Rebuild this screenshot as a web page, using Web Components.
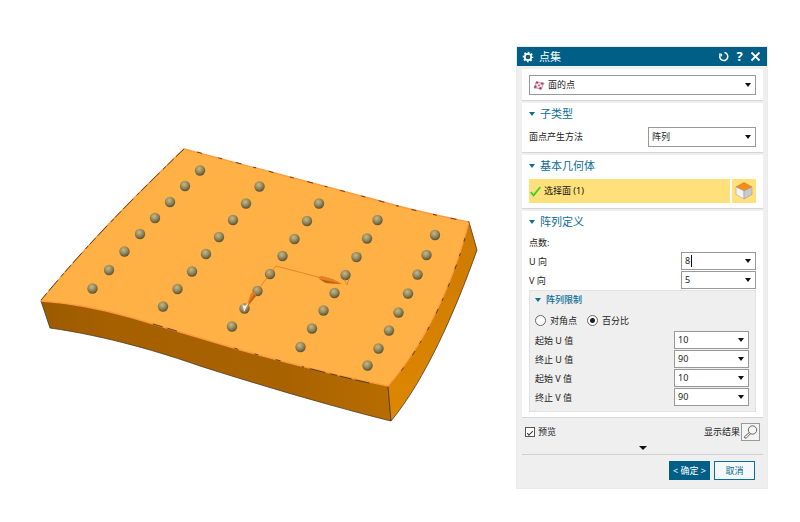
<!DOCTYPE html>
<html lang="zh-CN">
<head>
<meta charset="utf-8">
<title>点集</title>
<style>
    body {
        margin: 0;
        background: #fff;
        color: #222;
        font: 9px/12px "Noto Sans", "Noto Sans CJK SC", sans-serif;
    }
</style>
</head>
<body>

<template id="app-window-template">
    <style>
        :host {
            display: grid;
            grid-template-columns: minmax(0, 1fr) 250px;
            align-items: start;
            padding-right: 33px;
        }
        .dialog {
            padding: 47px 0 32px;
        }
    </style>
    <slot name="view"></slot>
    <div class="dialog"><slot></slot></div>
</template>

<template id="model-view-template">
    <style>
        :host { display: block; }
        svg { display: block; width: 100%; height: auto; }
    </style>
    <svg viewBox="0 0 517 522" role="img" aria-label="模型">
        <defs>
            <radialGradient id="ball" cx="42%" cy="34%" r="65%">
                <stop offset="0" stop-color="#c6b985"/>
                <stop offset=".5" stop-color="#998c60"/>
                <stop offset="1" stop-color="#5c5436"/>
            </radialGradient>
            <linearGradient id="front">
                <stop offset="0" stop-color="#9c5a00"/>
                <stop offset=".2" stop-color="#a66000"/>
                <stop offset=".7" stop-color="#a86200"/>
                <stop offset="1" stop-color="#b86d00"/>
            </linearGradient>
            <linearGradient id="side" x1="0" y1="0" x2="0" y2="1">
                <stop offset="0" stop-color="#cc7a00"/>
                <stop offset="1" stop-color="#de8700"/>
            </linearGradient>
        </defs>
        <path fill="url(#front)" stroke="#4d3826" stroke-width=".8" d="M41 301 L50 328 C107 336 163 353 200 366 C250 382 330 406 391 421 L388 386 C330 374 280 361 237 349 L133 318 Q85 304 41 301Z"/>
        <path fill="url(#side)" stroke="#4d3826" stroke-width=".8" d="M469 222 L477 250 C455 312 425 380 391 421 L388 386 C425 344 453 284 469 222Z"/>
        <path id="top" fill="#ffb145" stroke="#ff9a3d" stroke-width="1.4" d="M184 149 C270 172 335 189 380 201 C410 210 440 216 469 222 C453 284 425 344 388 386 C330 374 280 361 237 349 L133 318 Q85 304 41 301 C72 263 108 222 184 149Z"/>
        <g fill="none" stroke="#49382a" stroke-width=".9">
            <path stroke-dasharray="5 17 4 14 6 12 3 13" d="M197 152 C275 173 335 189 380 201 C410 210 440 216 469 222"/>
            <path stroke-dasharray="4 12 3 9 5 15" d="M465 238 C450 291 424 344 394 380"/>
            <path stroke-dasharray="14 4 12 3 7 5 16 6 2 22 5 18 4 17 4 60 10 5 10 300" d="M369 383 C325 373 280 361 237 349 L133 318 Q85 304 41 301"/>
            <path stroke-dasharray="9 3 14 5 4 2" d="M41 300 C72 263 108 222 184 149"/>
        </g>
        <g id="points" fill="url(#ball)"></g>
        <g fill="none" stroke="#dc7c24" stroke-width=".8">
            <path d="M247 304 L276 266 L318 277"/>
            <path d="M344 279 L347 285 L349 279"/>
        </g>
        <path fill="#e87f22" d="M317 277 L322 276 L333 279 L342 284 L326 283Z"/>
        <path fill="#b95d12" d="M319 279 L342 284 L326 283Z"/>
        <path fill="#e87f22" d="M251 293 Q255 291 256 296 L252 301 L245 311Z"/>
        <path fill="#c46618" d="M254 294 L256 296 L252 301 L247 306Z"/>
        <path fill="#f1eee9" d="M249 302 L244 312 L243 306 L241 304 L245 306Z"/>
    </svg>
</template>

<template id="dialog-panel-template">
    <style>
        :host {
            display: block;
            background: #efefef;
            box-shadow: 0 0 0 1px #ebebeb;
        }
        header {
            display: flex;
            align-items: center;
            gap: 5px;
            height: 19px;
            padding: 0 6px 0 5px;
            background: #005f87;
            color: #fff;
        }
        h1 {
            flex: 1;
            margin: 0;
            font-size: 11px;
            font-weight: normal;
            line-height: 19px;
        }
        header button {
            display: flex;
            justify-content: center;
            width: 11px;
            padding: 0;
            border: 0;
            background: none;
            color: inherit;
            font: bold 13px/19px "Noto Sans", sans-serif;
        }
        main {
            display: grid;
            gap: 2px;
            padding: 3px 4px 0 5px;
        }
    </style>
    <header>
        <svg width="12" height="12" viewBox="0 0 12 12" fill="none" stroke="#fff">
            <circle cx="6" cy="6" r="3.2" stroke-width="1.7"/>
            <circle cx="6" cy="6" r="4.5" stroke-width="1.6" stroke-dasharray="1.8 1.734" stroke-dashoffset=".9"/>
        </svg>
        <h1></h1>
        <button type="button" aria-label="重置"><svg width="11" height="11" viewBox="0 0 11 11" fill="none" stroke="#fff" stroke-width="1.5"><path d="M2.4 3.4 A4 4 0 1 0 6.5 1.6"/><path d="M1 3 H3.6 V5.4" stroke-width="1"/></svg></button>
        <button type="button">?</button>
        <button type="button" aria-label="关闭"><svg width="11" height="11" viewBox="0 0 11 11" stroke="#fff" stroke-width="1.8"><path d="M1.5 1.5 L9.5 9.5 M9.5 1.5 L1.5 9.5"/></svg></button>
    </header>
    <main><slot></slot></main>
    <slot name="footer"></slot>
</template>

<template id="panel-section-template">
    <style>
        :host {
            display: block;
            padding: 0 7px 5px;
            background: #fff;
            border-bottom: 1px solid #d6d6d6;
        }
        h2 { margin: 0; font: inherit; }
        button {
            display: flex;
            align-items: center;
            gap: 5px;
            height: 21px;
            padding: 0;
            border: 0;
            background: none;
            color: #0b6e94;
            font: inherit;
            font-size: 11px;
            line-height: 21px;
        }
        :host([nested]) {
            padding: 0 6px 4px 5px;
            background: #efefef;
            border: 1px solid #e2e2e2;
        }
        :host([nested]) button {
            height: 18px;
            font-size: 9px;
            font-weight: 500;
            line-height: 18px;
        }
    </style>
    <h2><button type="button"><svg width="6" height="4" viewBox="0 0 6 4"><path fill="#0b6e94" d="M0 0 H6 L3 4Z"/></svg><span></span></button></h2>
    <slot></slot>
</template>

<template id="field-row-template">
    <style>
        :host {
            display: flex;
            align-items: center;
            justify-content: space-between;
            --w: 75px;
        }
        label:empty { display: none; }
        .box {
            display: flex;
            align-items: center;
            box-sizing: border-box;
            width: var(--w);
            height: 18px;
            margin-bottom: 1px;
            border: 1px solid #999;
            background: #fff;
        }
        :host([tall]) .box { height: 20px; margin: 0; }
        select, input {
            flex: 1;
            min-width: 0;
            height: 16px;
            margin: 0;
            padding: 0 3px;
            border: 0;
            outline: 0;
            background: none;
            appearance: none;
            color: #222;
            font: inherit;
            line-height: 16px;
        }
        .arrow {
            display: flex;
            padding: 0 4px;
            border: 0;
            background: none;
        }
        :host([editing]) input {
            background: linear-gradient(#111, #111) 9px 2px / 1px 12px no-repeat;
        }
        ::slotted(svg) { flex: none; margin-left: 3px; }
    </style>
    <label for="control"></label>
    <div class="box"><slot></slot><button class="arrow" type="button" tabindex="-1" aria-label="展开"><svg width="6" height="4" viewBox="0 0 6 4"><path fill="#111" d="M0 0 H6 L3 4Z"/></svg></button></div>
</template>

<template id="face-picker-template">
    <style>
        :host { display: flex; gap: 2px; margin-top: 3px; }
        button {
            display: flex;
            align-items: center;
            height: 24px;
            padding: 0;
            border: 0;
            background: #ffe07a;
            color: #111;
            font: inherit;
        }
        .pick { flex: 1; gap: 3px; padding: 0 1px; }
        .filter { width: 24px; justify-content: center; }
    </style>
    <button class="pick" type="button">
        <svg width="11" height="11" viewBox="0 0 11 11" fill="none" stroke="#35d321" stroke-width="1.8"><path d="M.8 6.2 L3.6 9.3 L10.3 1"/></svg>
        <span><slot></slot></span>
    </button>
    <button class="filter" type="button" aria-label="面规则">
        <svg width="20" height="20" viewBox="0 0 20 20">
            <path fill="#f58a1f" stroke="#d87412" stroke-width=".6" d="M10 1.5 L18 6 L10 10 L2 6Z"/>
            <path fill="#f3f3f3" stroke="#a9a9a9" stroke-width=".6" d="M2 6 L10 10 V18 L2 13.5Z"/>
            <path fill="#c9cacc" stroke="#9a9a9a" stroke-width=".6" d="M18 6 L10 10 V18 L18 13.5Z"/>
        </svg>
    </button>
</template>

<template id="mode-choice-template">
    <style>
        :host { display: flex; gap: 10px; height: 21px; margin-top: 1px; align-items: center; }
        label { display: flex; align-items: center; gap: 4px; }
        input {
            width: 11px;
            height: 11px;
            margin: 0;
            appearance: none;
            border: 1px solid #666;
            border-radius: 50%;
            background: #fff;
        }
        input:checked { background: radial-gradient(circle, #222 2px, #fff 3px); }
    </style>
    <label><input type="radio" name="mode"><span>对角点</span></label>
    <label><input type="radio" name="mode" checked><span>百分比</span></label>
</template>

<template id="dialog-footer-template">
    <style>
        :host { display: block; padding: 4px 4px 8px 5px; }
        div, label { display: flex; align-items: center; }
        .preview { justify-content: space-between; height: 20px; padding: 0 3px; }
        label { gap: 3px; }
        input {
            display: grid;
            place-items: center;
            width: 10px;
            height: 10px;
            margin: 0;
            appearance: none;
            border: 1px solid #555;
            background: #fff;
        }
        input:checked::before {
            content: "";
            width: 5px;
            height: 2px;
            border: solid #333;
            border-width: 0 0 1px 1px;
            transform: rotate(-45deg);
        }
        button { padding: 0; font: inherit; }
        .find {
            display: flex;
            margin-left: 1px;
            border: 1px solid #999;
            background: #f4f4f4;
        }
        .more {
            display: flex;
            justify-content: center;
            align-items: center;
            width: 100%;
            height: 13px;
            border: 0;
            border-bottom: 1px solid #d0d0d0;
            background: none;
        }
        .actions { justify-content: flex-end; gap: 4px; padding: 6px 8px 0 0; }
        .actions button {
            width: 41px;
            height: 19px;
            border: 1px solid #0b6e94;
            background: #f4f8fa;
            color: #0b6e94;
            line-height: 16px;
        }
        .actions .ok { background: #005f87; border-color: #005f87; color: #fff; }
    </style>
    <div class="preview">
        <label><input type="checkbox" checked><span>预览</span></label>
        <div>
            <span>显示结果</span>
            <button class="find" type="button" aria-label="显示结果">
                <svg width="17" height="16" viewBox="0 0 17 16" fill="none" stroke="#666"><circle cx="10.5" cy="6" r="4.2"/><path d="M7.2 8.7 L2.4 12.6 Q2.4 14.6 4.2 14.2 L8.4 9.8"/></svg>
            </button>
        </div>
    </div>
    <button class="more" type="button" aria-label="更多"><svg width="8" height="4" viewBox="0 0 8 4"><path fill="#111" d="M0 0 H8 L4 4Z"/></svg></button>
    <div class="actions">
        <button class="ok" type="button">&lt; 确定 &gt;</button>
        <button type="button">取消</button>
    </div>
</template>

<app-window>
    <model-view slot="view"></model-view>
    <dialog-panel heading="点集">
        <panel-section>
            <field-row tall kind="select" name="类型" value="面的点" style="--w: 100%; padding-top: 6px">
                <svg width="12" height="11" viewBox="0 0 12 11">
                    <path fill="#dfe3f6" stroke="#8b8fc4" stroke-width=".8" d="M3.5 1.5 Q7 3.5 11 3 L8 9.5 Q4.5 7.5 1 8Z"/>
                    <g fill="#d8343a"><circle cx="4" cy="2.6" r="1.2"/><circle cx="9" cy="3.6" r="1.2"/><circle cx="2.4" cy="6.8" r="1.2"/><circle cx="7.4" cy="8.2" r="1.2"/><circle cx="6" cy="5.4" r=".8"/></g>
                </svg>
            </field-row>
        </panel-section>
        <panel-section heading="子类型">
            <field-row tall kind="select" label="面点产生方法" value="阵列" style="--w: 108px; margin-top: 3px"></field-row>
        </panel-section>
        <panel-section heading="基本几何体">
            <face-picker>选择面 (1)</face-picker>
        </panel-section>
        <panel-section heading="阵列定义">
            <div style="padding: 5px 0 3px">点数:</div>
            <field-row editing label="U 向" value="8"></field-row>
            <field-row label="V 向" value="5"></field-row>
            <panel-section nested heading="阵列限制">
                <mode-choice></mode-choice>
                <field-row label="起始 U 值" value="10"></field-row>
                <field-row label="终止 U 值" value="90"></field-row>
                <field-row label="起始 V 值" value="10"></field-row>
                <field-row label="终止 V 值" value="90"></field-row>
            </panel-section>
        </panel-section>
        <dialog-footer slot="footer"></dialog-footer>
    </dialog-panel>
</app-window>

<script>
    class TemplateElement extends HTMLElement {
        constructor() {
            super();
            const template = document.getElementById(this.localName + '-template').content;
            this.attachShadow({ mode: 'open' }).appendChild(template.cloneNode(true));
        }
    }

    class ModelView extends TemplateElement {
        connectedCallback() {
            const columns = [
                [[200, 170.5], [185, 186], [170, 202], [155, 218], [140, 234], [124.5, 251.5], [109, 270], [92.5, 288.5]],
                [[259.5, 186.5], [246, 203.5], [233, 220], [219, 237], [206, 254], [192, 271.5], [177.5, 289], [163, 306.5]],
                [[319, 203.5], [307, 221], [294.5, 239], [282.5, 256], [270, 274], [257.5, 291], [244.5, 308.5], [232, 326.5]],
                [[377.5, 220], [367, 238.5], [356.5, 257], [345.5, 275], [334.5, 293], [323.5, 310.5], [312, 328.5], [300.5, 347]],
                [[435, 235], [426.5, 255], [417.5, 274.5], [408, 293.5], [398.5, 312.5], [389, 330.5], [378.5, 348.5], [367.5, 365.5]]
            ];
            const group = this.shadowRoot.getElementById('points');
            for (const [x, y] of columns.flat()) {
                const ball = document.createElementNS('http://www.w3.org/2000/svg', 'circle');
                ball.setAttribute('cx', x);
                ball.setAttribute('cy', y);
                ball.setAttribute('r', 5.2);
                group.appendChild(ball);
            }
        }
    }

    class DialogPanel extends TemplateElement {
        connectedCallback() {
            this.shadowRoot.querySelector('h1').textContent = this.getAttribute('heading') || '';
        }
    }

    class PanelSection extends TemplateElement {
        connectedCallback() {
            const heading = this.getAttribute('heading');
            if (heading) {
                this.shadowRoot.querySelector('span').textContent = heading;
            } else {
                this.shadowRoot.querySelector('h2').hidden = true;
            }
        }
    }

    class FieldRow extends TemplateElement {
        connectedCallback() {
            const value = this.getAttribute('value') || '';
            const isSelect = this.getAttribute('kind') === 'select';
            const control = document.createElement(isSelect ? 'select' : 'input');
            control.id = 'control';
            if (isSelect) {
                control.add(new Option(value));
            } else {
                control.value = value;
            }
            if (this.hasAttribute('name')) {
                control.setAttribute('aria-label', this.getAttribute('name'));
            }
            this.shadowRoot.querySelector('label').textContent = this.getAttribute('label') || '';
            this.shadowRoot.querySelector('.arrow').before(control);
        }
    }

    customElements.define('app-window', class extends TemplateElement {});
    customElements.define('model-view', ModelView);
    customElements.define('dialog-panel', DialogPanel);
    customElements.define('panel-section', PanelSection);
    customElements.define('field-row', FieldRow);
    customElements.define('face-picker', class extends TemplateElement {});
    customElements.define('mode-choice', class extends TemplateElement {});
    customElements.define('dialog-footer', class extends TemplateElement {});
</script>
</body>
</html>
